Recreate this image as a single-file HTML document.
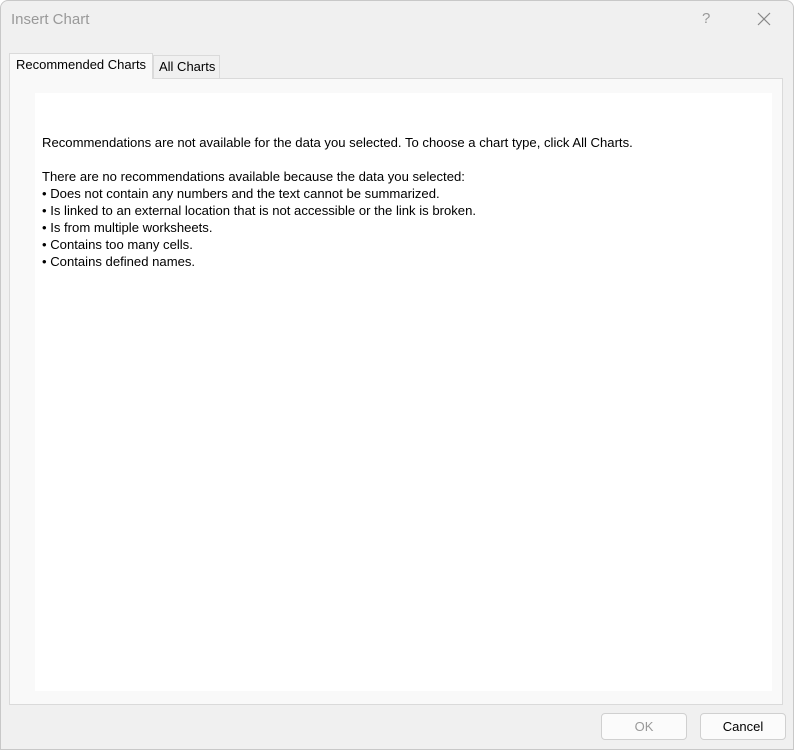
<!DOCTYPE html>
<html><head><meta charset="utf-8"><style>
*{margin:0;padding:0;box-sizing:border-box}
body{width:794px;height:750px;background:#fff;position:relative;overflow:hidden;font-family:"Liberation Sans",sans-serif}
.win{position:absolute;left:0;top:0;width:794px;height:750px;background:#f0f0f0;border:1px solid #c8c8c8;border-radius:8px 8px 0 0}
.title{position:absolute;left:11px;top:11px;font-size:15px;color:#999}
.q{position:absolute;left:702px;top:10px;font-size:15px;color:#999}
.x{position:absolute;left:757px;top:12px}
.tab1{position:absolute;left:9px;top:53px;width:144px;height:26px;background:#f9f9f9;border:1px solid #dadada;border-bottom:none;font-size:13px;padding:3px 0 0 6px;color:#000;z-index:2}
.tab2{position:absolute;left:153px;top:55px;width:67px;height:23px;background:#f0f0f0;border:1px solid #dadada;border-bottom:none;font-size:13px;padding:3px 0 0 5px;color:#000}
.panel{position:absolute;left:9px;top:78px;width:774px;height:627px;background:#f9f9f9;border:1px solid #dadada}
.inner{position:absolute;left:35px;top:93px;width:737px;height:598px;background:#fff}
.txt{position:absolute;left:42px;top:134px;font-size:13.1px;line-height:17px;color:#000;white-space:pre}
.btn{position:absolute;top:713px;width:86px;height:27px;border:1px solid #d0d0d0;border-radius:4px;background:#fbfbfb;font-size:13px;text-align:center;line-height:25px}
</style></head><body>
<div class="win"></div>
<div class="title">Insert Chart</div>
<div class="q">?</div>
<svg class="x" width="14" height="14" viewBox="0 0 14 14"><path d="M1 1L13 13M13 1L1 13" stroke="#888" stroke-width="1.2"/></svg>
<div class="panel"></div>
<div class="tab2">All Charts</div>
<div class="tab1">Recommended Charts</div>
<div class="inner"></div>
<div class="txt">Recommendations are not available for the data you selected. To choose a chart type, click All Charts.

There are no recommendations available because the data you selected:
• Does not contain any numbers and the text cannot be summarized.
• Is linked to an external location that is not accessible or the link is broken.
• Is from multiple worksheets.
• Contains too many cells.
• Contains defined names.</div>
<div class="btn" style="left:601px;color:#999">OK</div>
<div class="btn" style="left:700px;color:#000">Cancel</div>
</body></html>
